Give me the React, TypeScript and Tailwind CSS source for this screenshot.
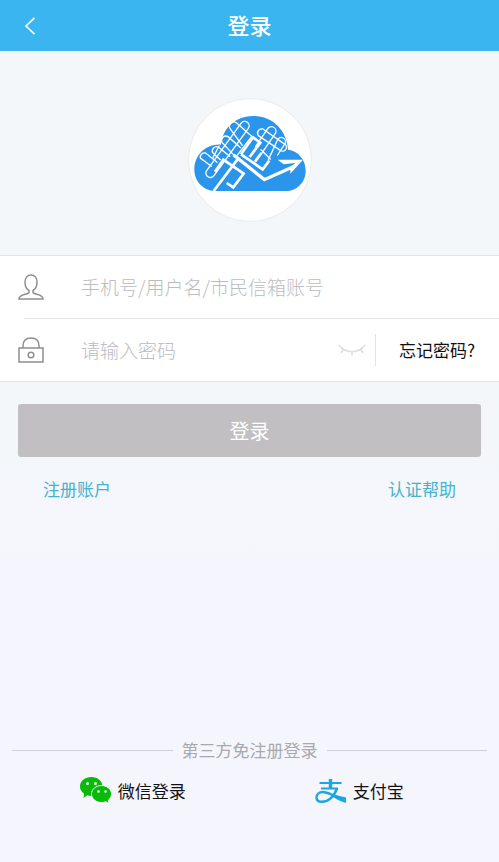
import type { ReactNode } from 'react';

const LogoIcon = () => (
  <svg viewBox="24 26 366 366" className="size-full" aria-hidden="true">
    <path
      fill="#2b95ec"
      d="M102 302C64 300 40 270 40 238C40 195 74 160 120 163C125 112 165 77 217 77C275 77 318 120 321 178C352 182 374 208 374 241C374 276 348 302 314 302Z"
    />
    <g fill="none" stroke="#fff" strokeWidth="4" strokeLinecap="round">
      <path d="M180 99A13 13 0 0 1 202 114L100 254A13 13 0 0 1 76 242L180 99" />
      <path d="M91 228L58 203A13 13 0 0 1 74 188L108 216" />
      <path d="M118 208L95 187A13 13 0 0 1 112 170L146 198" />
      <path d="M160 196L123 156A13 13 0 0 1 141 139L179 172" />
      <path d="M184 165L149 117A13 13 0 0 1 168 99L212 138" />
      <path d="M212 138L168 196M114 167L96 202" />
      <path d="M224 168L258 118A13 13 0 0 1 284 128L240 192" />
      <path d="M232 136A13 13 0 0 1 246 116L312 162A11 11 0 0 1 298 180L232 136" />
      <path d="M262 208L290 148A12 12 0 0 1 312 160L290 194M240 178L268 206" />
    </g>
    <g fill="none" stroke="#fff" strokeWidth="8">
      <path d="M98 302L172 204M102 244L127 208L188 250L157 291L137 278" />
      <path d="M180 192L216 141L238 157L206 200M180 192L245 237L265 211M222 214L241 188" />
      <path d="M158 194L250 268L340 228" strokeWidth="10" />
    </g>
    <path fill="#fff" d="M290 208L366 208L328 250L328 234L342 218L308 222Z" />
  </svg>
);

const UserIcon = () => (
  <svg viewBox="0 0 26 26" className="size-[26px]" fill="none" stroke="#8f8f8f" strokeWidth="1.5" aria-hidden="true">
    <path d="M11 16.500C8.500 15 7 12 7 8.500C7 4 9.400 1 13 1S19 4 19 8.500C19 12 17.500 15 15 16.500V18.500C16.500 21 25 19.500 25 25H1C1 19.500 9.500 21 11 18.500Z" />
  </svg>
);

const LockIcon = () => (
  <svg viewBox="0 0 26 26" className="size-[26px]" fill="none" stroke="#8f8f8f" strokeWidth="1.5" aria-hidden="true">
    <path d="M1 11H25V25H1ZM5 11V9C5 4 8 1 13 1S21 4 21 9V11" />
    <circle cx="13" cy="18" r="2.800" />
  </svg>
);

const ClosedEyeIcon = () => (
  <svg viewBox="0 0 28 14" className="h-[14px] w-[28px]" fill="none" stroke="#ddd" strokeWidth="1.5" aria-hidden="true">
    <path d="M1 2C8 11 20 11 27 2M5.500 6L3 10M14 9V13M22.500 6L25 10" />
  </svg>
);

const WechatIcon = () => (
  <svg viewBox="0 0 32 27" className="h-[27px] w-[32px]" aria-hidden="true">
    <path fill="#07bb07" d="M11.500 0C17.500 0 22.500 4 22.500 9.500S17.500 19 11.500 19C10 19 8.500 18.800 7.200 18.300L3.500 21L4.200 16.800C1.500 15 0 12.500 0 9.500C0 4 5 0 11.500 0Z" />
    <path
      fill="#07bb07"
      stroke="#f4f7fc"
      strokeWidth="1"
      d="M21.500 8.500C27 8.500 31.500 12.200 31.500 17C31.500 19.600 30.200 21.800 28.300 23.300L29 26.500L25.800 24.800C24.500 25.300 23 25.500 21.500 25.500C16 25.500 11.500 21.800 11.500 17S16 8.500 21.500 8.500Z"
    />
    <g fill="#f4f7fc">
      <circle cx="7.500" cy="6.500" r="1.500" />
      <circle cx="15.500" cy="6.500" r="1.500" />
      <circle cx="18.500" cy="14.500" r="1.300" />
      <circle cx="25.500" cy="14.500" r="1.300" />
    </g>
  </svg>
);

const AlipayIcon = () => (
  <svg viewBox="0 0 32 26" className="h-[26px] w-[32px]" fill="none" stroke="#1aa5e3" aria-hidden="true">
    <path strokeWidth="2" d="M4.500 5H26.500M6 10.500H23" />
    <path strokeWidth="3.400" d="M15.500 1V10.500" />
    <path strokeWidth="2.400" d="M22 10.500C19 19 13 23.800 7 23.800C3.500 23.800 1.500 22 1.500 19.500C1.500 16.500 4 14 8 14C13 14 18 18 30 21.500" />
    <path fill="#1aa5e3" stroke="none" d="M18 16.500L31 19.500V25C26 23.500 21 21 17 18.500Z" />
  </svg>
);

interface FieldProps {
  id: string;
  type: string;
  label: string;
  placeholder: string;
  icon: ReactNode;
  children?: ReactNode;
}
const Field = ({ id, type, label, placeholder, icon, children }: FieldProps) => (
  <div className="flex h-[62px] items-center pl-[18px]">
    <label htmlFor={id} className="mr-[37px] shrink-0" aria-label={label}>
      {icon}
    </label>
    <input
      id={id}
      type={type}
      placeholder={placeholder}
      className="min-w-0 flex-1 bg-transparent text-[19px] font-light text-gray-600 outline-none placeholder:text-[#bcbcc0]"
    />
    {children}
  </div>
);

export default function App() {
  return (
    <div className="flex min-h-screen flex-col bg-linear-to-b from-[#f3f7f9] from-50% to-[#f5f6fd] to-65% font-['Noto_Sans_CJK_SC',sans-serif]">
      <header className="grid h-[51px] grid-cols-[1fr_auto_1fr] items-center bg-[#3bb5ef] px-6 pb-1 text-white">
        <button type="button" aria-label="返回" className="pt-1">
          <svg viewBox="0 0 12 18" className="h-[18px] w-3" fill="none" stroke="currentColor" strokeWidth="1.6">
            <path d="M10.500 0.800L2 9L10.500 17.200" />
          </svg>
        </button>
        <h1 className="text-[22px] leading-8 font-medium">登录</h1>
      </header>

      <main className="flex flex-1 flex-col">
        <div className="mx-auto mt-[47px] mb-[33px] size-[124px] overflow-hidden rounded-full border border-[#e9ebec] bg-white">
          <LogoIcon />
        </div>

        <form>
          <div className="border-y border-[#e2e5e7] bg-white">
            <Field id="account" type="text" label="账号" placeholder="手机号/用户名/市民信箱账号" icon={<UserIcon />} />
            <hr className="ml-6 border-[#e6e6e8]" />
            <Field id="password" type="password" label="密码" placeholder="请输入密码" icon={<LockIcon />}>
              <button type="button" aria-label="显示密码" className="mr-[9px]">
                <ClosedEyeIcon />
              </button>
              <a href="#forgot" className="flex h-8 items-center border-l border-[#e2e2e4] pr-6 pl-[23px] text-[17px] text-[#111]">
                忘记密码?
              </a>
            </Field>
          </div>
          <div className="px-[18px] pt-[22px]">
            <button type="submit" className="h-[53px] w-full rounded-[3px] bg-[#c1bfc2] text-xl text-white">
              登录
            </button>
          </div>
        </form>

        <div className="mt-5 flex justify-between px-[43px] text-[17px] leading-6 text-[#45b3cf]">
          <a href="#register">注册账户</a>
          <a href="#help">认证帮助</a>
        </div>

        <section className="mt-auto pb-[58px]">
          <div className="flex items-center gap-[9px] px-3">
            <hr className="flex-1 border-[#cfd0d4]" />
            <h2 className="text-[17px] leading-6 text-[#a9a9ad]">第三方免注册登录</h2>
            <hr className="flex-1 border-[#cfd0d4]" />
          </div>
          <div className="mt-[15px] grid grid-cols-2 text-[17px] leading-[27px] text-[#111]">
            <button type="button" className="flex items-center justify-center gap-[6px] pl-4">
              <WechatIcon />
              微信登录
            </button>
            <button type="button" className="flex items-center justify-center gap-[6px] pr-[30px]">
              <AlipayIcon />
              支付宝
            </button>
          </div>
        </section>
      </main>
    </div>
  );
}
